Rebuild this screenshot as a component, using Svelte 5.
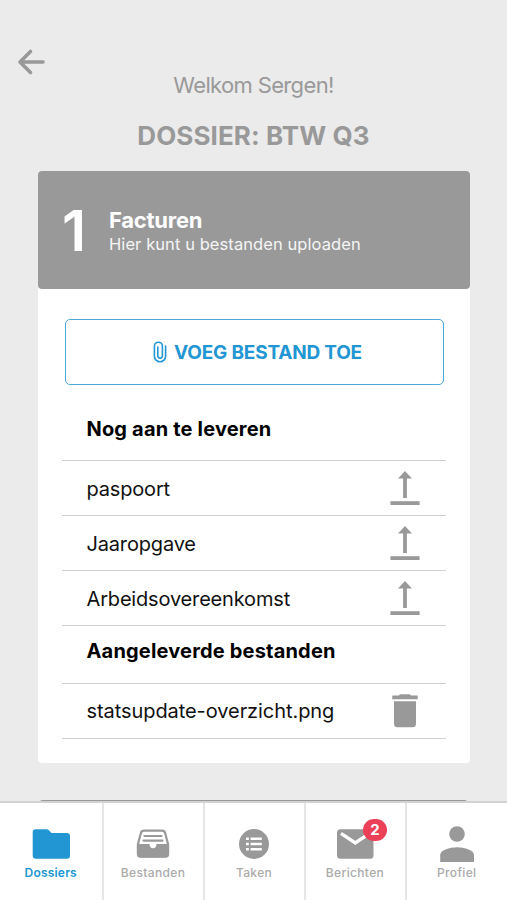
<script>
  let active = 'dossiers';

  const todo = ['paspoort', 'Jaaropgave', 'Arbeidsovereenkomst'];
  const delivered = ['statsupdate-overzicht.png'];

  const tabs = [
    { id: 'dossiers', label: 'Dossiers' },
    { id: 'bestanden', label: 'Bestanden' },
    { id: 'taken', label: 'Taken' },
    { id: 'berichten', label: 'Berichten', badge: 2 },
    { id: 'profiel', label: 'Profiel' }
  ];
</script>

<div class="screen">
  <main>
    <button class="back" aria-label="Terug">
      <svg width="28" height="28" viewBox="0 0 28 28">
        <path d="M13.5 3.5L3 14l10.5 10.5M3.5 14H26" />
      </svg>
    </button>
    <p class="welcome">Welkom Sergen!</p>
    <h1>DOSSIER: BTW Q3</h1>

    <section class="card">
      <header>
        <span class="step">1</span>
        <div class="intro">
          <h2>Facturen</h2>
          <p>Hier kunt u bestanden uploaden</p>
        </div>
      </header>

      <div class="body">
        <button class="add">
          <svg width="14" height="22" viewBox="0 0 14 22">
            <path d="M12.6 5v10.2a5.6 5.6 0 0 1-11.2 0V5.2a4 4 0 0 1 8 0v9.6a2.3 2.3 0 0 1-4.6 0V6" />
          </svg>
          <span>VOEG BESTAND TOE</span>
        </button>

        <h3 class="first">Nog aan te leveren</h3>
        {#each todo as name}
          <div class="row">
            <span>{name}</span>
            <svg width="30" height="36" viewBox="0 0 30 36">
              <path d="M15 1l7 7.6h-5.1V28h-3.8V8.6H8z" />
              <path d="M.4 31.2h29.2V35H.4z" />
            </svg>
          </div>
        {/each}

        <h3>Aangeleverde bestanden</h3>
        {#each delivered as name}
          <div class="row file">
            <span>{name}</span>
            <svg width="30" height="36" viewBox="0 0 30 36">
              <path d="M9 2.6q.6-1.4 2-1.4h8q1.4 0 2 1.4h6.7v3.7H2.3V2.6z" />
              <path d="M4 8.2h22v22.6a3.5 3.5 0 0 1-3.5 3.5h-15A3.5 3.5 0 0 1 4 30.8z" />
            </svg>
          </div>
        {/each}
      </div>
    </section>

    <div class="next-card"></div>
  </main>

  <nav>
    {#each tabs as tab}
      <button class="tab" class:active={active === tab.id} on:click={() => (active = tab.id)}>
        <span class="icon">
          {#if tab.id === 'dossiers'}
            <svg width="38" height="38" viewBox="0 0 38 38">
              <path d="M3.5 4.2h11.2q1.3 0 2.2 1l2.5 2.8h15.6a3 3 0 0 1 3 3v19.8a3 3 0 0 1-3 3H3.7a3 3 0 0 1-3-3V7a2.8 2.8 0 0 1 2.8-2.8z" />
            </svg>
          {:else if tab.id === 'bestanden'}
            <svg width="38" height="38" viewBox="0 0 38 38">
              <path class="line" d="M10 5.7h18q2.500 0 3.200 2.500l2.900 11.200v9.300q0 2.900-2.900 2.900H6.800q-2.900 0-2.900-2.900v-9.300L6.800 8.200Q7.500 5.700 10 5.700z" />
              <path d="M3 19h12.500q.3 4.300 3.500 4.300t3.500-4.300H35v10q0 3.500-3.500 3.500h-25Q3 32.500 3 29z" />
              <path class="line" d="M10.500 11h17M9.500 15.600h19" />
            </svg>
          {:else if tab.id === 'taken'}
            <svg width="38" height="38" viewBox="0 0 38 38">
              <circle cx="19" cy="19" r="15" />
              <path d="M11 13.7h2.8M15.6 13.7h11.2M11 19h2.8M15.6 19h11.2M11 24.2h2.8M15.6 24.2h11.2" stroke="#fff" stroke-width="2.6" />
            </svg>
          {:else if tab.id === 'berichten'}
            <svg width="38" height="38" viewBox="0 0 38 38">
              <rect x="1" y="4.2" width="36.5" height="29.6" rx="3.5" />
              <path d="M5 8.3L19.3 18 33.5 8.3" fill="none" stroke="#fff" stroke-width="3.4" />
            </svg>
          {:else}
            <svg width="38" height="38" viewBox="0 0 38 38">
              <circle cx="19" cy="9" r="7.8" />
              <path d="M2.2 37v-7c0-4.500 9-7.700 16.800-7.700s17 3.200 17 7.700v7z" />
            </svg>
          {/if}
          {#if tab.badge}
            <span class="badge">{tab.badge}</span>
          {/if}
        </span>
        <span class="label">{tab.label}</span>
      </button>
    {/each}
  </nav>
</div>

<style>
  :global(body) {
    margin: 0;
  }

  .screen {
    display: flex;
    flex-direction: column;
    width: 507px;
    height: 900px;
    overflow: hidden;
    background: #ebebeb;
    color: #999;
    font-family: Inter, 'Liberation Sans', sans-serif;
  }

  h1, h2, h3, p {
    margin: 0;
  }

  button {
    padding: 0;
    border: 0;
    background: none;
    font: inherit;
    color: inherit;
  }

  svg {
    display: block;
    fill: currentColor;
  }

  main {
    flex: 1;
    min-height: 0;
    overflow: hidden;
    display: flex;
    flex-direction: column;
  }

  .back {
    align-self: flex-start;
    margin: 48px 0 0 17px;
    height: 24px;
  }

  .back svg {
    fill: none;
    stroke: #999;
    stroke-width: 3.6;
    stroke-linecap: round;
    stroke-linejoin: round;
  }

  .welcome {
    height: 26px;
    line-height: 26px;
    font-size: 22px;
    text-align: center;
    letter-spacing: -0.65px;
  }

  h1 {
    margin-top: 21px;
    line-height: 34px;
    font-size: 26px;
    font-weight: 700;
    letter-spacing: 0.08px;
    text-align: center;
  }

  .card {
    flex: none;
    height: 592px;
    margin: 18px 37px 0 38px;
    border-radius: 4px;
    background: #fff;
  }

  header {
    display: flex;
    align-items: center;
    height: 118px;
    border-radius: 4px;
    background: #999;
    color: #fff;
  }

  .step {
    width: 71px;
    padding: 2px 0 0 24px;
    box-sizing: border-box;
    font-size: 57px;
    line-height: 60px;
    font-weight: 600;
  }

  .intro {
    padding-top: 2px;
  }

  h2 {
    font-size: 22px;
    line-height: 26px;
    font-weight: 700;
    letter-spacing: -0.25px;
  }

  header p {
    font-size: 16.5px;
    line-height: 22px;
    letter-spacing: 0.08px;
    color: #f5f5f5;
  }

  .body {
    padding: 30px 24px 0;
  }

  .add {
    display: flex;
    align-items: center;
    justify-content: center;
    gap: 7px;
    width: 379px;
    height: 66px;
    margin-left: 2.5px;
    padding-left: 7px;
    box-sizing: border-box;
    border: 1.5px solid #4ba8d8;
    border-radius: 5px;
    color: #2196d3;
    font-size: 19px;
    font-weight: 700;
    letter-spacing: -0.2px;
  }

  .add svg {
    fill: none;
    stroke: currentColor;
    stroke-width: 1.6;
    stroke-linecap: round;
  }

  h3 {
    height: 57px;
    padding-left: 24.5px;
    border-bottom: 1px solid #d0d0d0;
    line-height: 50px;
    font-size: 20px;
    font-weight: 700;
    letter-spacing: 0.18px;
    color: #000;
  }

  .first {
    height: 56px;
    margin-top: 19px;
  }

  .row {
    display: flex;
    align-items: center;
    justify-content: space-between;
    height: 54px;
    padding: 0 26px 0 24.5px;
    border-bottom: 1px solid #d0d0d0;
    font-size: 20px;
    letter-spacing: -0.17px;
  }

  .row span {
    padding-top: 1px;
    color: #111;
  }

  .file {
    letter-spacing: -0.07px;
  }

  .file span {
    padding-top: 0;
  }

  .next-card {
    flex: none;
    height: 118px;
    margin: 36.5px 39px 0;
    border-radius: 4px;
    background: #999;
  }

  nav {
    flex: none;
    display: grid;
    grid-template-columns: 103.5px 101px 101px 101px 1fr;
    height: 97px;
    border-top: 2px solid #d3d3d3;
    background: #fff;
  }

  .tab {
    display: flex;
    flex-direction: column;
    align-items: center;
    padding-top: 22px;
    border-right: 2px solid #e5e5e5;
    color: #999;
  }

  .tab:last-child {
    border-right: 0;
  }

  .active {
    color: #2196d3;
  }

  .icon {
    position: relative;
  }

  .line {
    fill: none;
    stroke: currentColor;
    stroke-width: 2.2;
    stroke-linecap: round;
  }

  .badge {
    position: absolute;
    top: -6px;
    left: 27px;
    width: 24px;
    height: 22px;
    border-radius: 11px;
    background: #ec4059;
    color: #fff;
    font-size: 15px;
    line-height: 22px;
    font-weight: 700;
    text-align: center;
  }

  .label {
    margin-top: 2px;
    font-size: 12px;
    line-height: 16px;
    font-weight: 500;
    letter-spacing: 0.35px;
    color: #aaa;
  }

  .active .label {
    color: #2196d3;
    font-weight: 600;
    letter-spacing: 0.2px;
  }
</style>
